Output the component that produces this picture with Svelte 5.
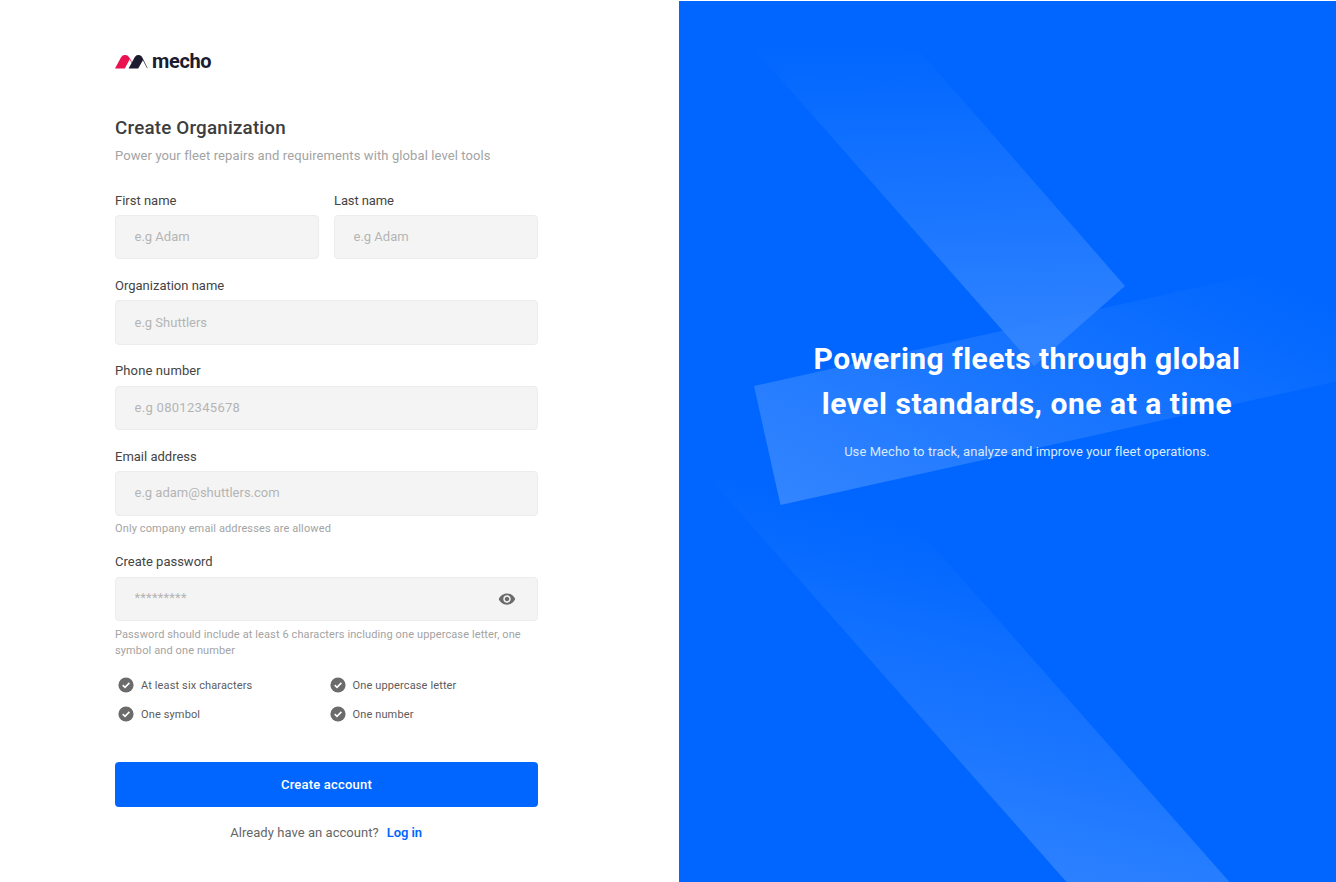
<script>
  const rules = ['At least six characters', 'One uppercase letter', 'One symbol', 'One number'];
</script>

<main class="page">
  <section class="left">
    <div class="logo">
      <svg width="33" height="14" viewBox="0 0 33 14" aria-hidden="true">
        <path d="M0 13.4 6.1 2.2Q7.3 0 9.6 0H10.5Q12.6 0 13.7 1.8L14.9 4 9.8 13.4Z" fill="#e9114f" />
        <path d="M14.2 2.8 17.2 8.2" stroke="#e9114f" stroke-width=".8" />
        <path d="M13.6 13.4 19.7 2.2Q20.9 0 23.2 0H23.7Q25.8 0 26.9 1.8L32.6 13.1 32.1 13.3 27.9 5.3 23.2 13.4Z" fill="#1c1b30" />
      </svg>
      <span>mecho</span>
    </div>
    <h1>Create Organization</h1>
    <p class="sub">Power your fleet repairs and requirements with global level tools</p>

    <form>
      <div class="pair">
        <label class="field"><span>First name</span><input placeholder="e.g Adam" /></label>
        <label class="field"><span class="t-last">Last name</span><input placeholder="e.g Adam" /></label>
      </div>
      <label class="field"><span>Organization name</span><input placeholder="e.g Shuttlers" /></label>
      <label class="field"><span class="t-phone">Phone number</span><input class="i-phone" placeholder="e.g 08012345678" /></label>
      <label class="field"><span>Email address</span><input placeholder="e.g adam@shuttlers.com" /></label>
      <p class="hint">Only company email addresses are allowed</p>
      <div class="field pw">
        <label for="pw">Create password</label>
        <div class="box">
          <input id="pw" class="i-pw" placeholder="*********" />
          <svg class="eye" width="18" height="18" viewBox="0 0 24 24" aria-hidden="true">
            <path fill="#6b6b6b" d="M12 4.5C7 4.5 2.73 7.61 1 12c1.73 4.39 6 7.5 11 7.5s9.27-3.11 11-7.5c-1.73-4.39-6-7.5-11-7.5zM12 17c-2.76 0-5-2.24-5-5s2.24-5 5-5 5 2.24 5 5-2.24 5-5 5zm0-8c-1.66 0-3 1.34-3 3s1.34 3 3 3 3-1.34 3-3-1.34-3-3-3z" />
          </svg>
        </div>
      </div>
      <p class="hint long">Password should include at least 6 characters including one uppercase letter, one<br />symbol and one number</p>
      <ul>
        {#each rules as r}
          <li>
            <svg width="16" height="16" viewBox="0 0 16 16" aria-hidden="true">
              <circle cx="8" cy="8" r="7.6" fill="#6b6b6b" />
              <path d="M4.7 8.2 7 10.3 11.4 5.9" fill="none" stroke="#fff" stroke-width="1.6" />
            </svg>
            <span>{r}</span>
          </li>
        {/each}
      </ul>
      <button type="button">Create account</button>
    </form>
    <p class="login"><span>Already have an account?</span><a href="#login">Log in</a></p>
  </section>

  <section class="right">
    <svg class="art" viewBox="679 1 657 880.5" preserveAspectRatio="none" aria-hidden="true">
      <defs>
        <linearGradient id="a" gradientUnits="userSpaceOnUse" x1="960" y1="367" x2="955" y2="40">
          <stop stop-color="#3385ff" /><stop offset="1" stop-color="#3385ff" stop-opacity="0" />
        </linearGradient>
        <linearGradient id="b" gradientUnits="userSpaceOnUse" x1="780" y1="505" x2="967" y2="123">
          <stop stop-color="#3385ff" /><stop offset="1" stop-color="#3385ff" stop-opacity="0" />
        </linearGradient>
        <linearGradient id="c" gradientUnits="userSpaceOnUse" x1="872" y1="887" x2="960" y2="533">
          <stop stop-color="#3385ff" /><stop offset="1" stop-color="#3385ff" stop-opacity="0" />
        </linearGradient>
      </defs>
      <path d="M754 386 1336 256.5V381.5L780.5 505Z" fill="url(#b)" />
      <path d="M1125 286 1034 366 746 40 910 40Z" fill="url(#a)" />
      <path d="M690 456 1066.5 882H1229.5L850 452Z" fill="url(#c)" />
    </svg>
    <div class="pitch">
      <h2><span class="l1">Powering fleets through global</span><br /><span class="l2">level standards, one at a time</span></h2>
      <p>Use Mecho to track, analyze and improve your fleet operations.</p>
    </div>
  </section>
</main>

<style>
  :global(body) { margin: 0; background: #fff; }
  * { box-sizing: border-box; }
  h1, h2, p, ul { margin: 0; padding: 0; }
  .page { display: flex; width: 1336px; height: 882px; overflow: hidden; font-family: Roboto, "Noto Sans", sans-serif; }
  .left { width: 679px; padding: 50px 0 0 115px; }
  .logo { display: flex; align-items: center; gap: 4px; height: 24px; }
  .logo span { margin-top: -2px; font-size: 20px; font-weight: 700; line-height: 24px; letter-spacing: -.35px; color: #1c1b30; }
  h1 { margin-top: 40px; font-size: 18.8px; line-height: 28px; font-weight: 500; letter-spacing: .2px; color: #3d3d3d; }
  .sub { margin-top: 4px; font-size: 13px; line-height: 20px; letter-spacing: .1px; color: #a3a3a3; }
  form { width: 423px; margin-top: 24.5px; }
  .pair { display: grid; grid-template-columns: 204px 204px; gap: 15px; }
  .field { display: flex; flex-direction: column; gap: 5.6px; height: 69px; margin-bottom: 16.35px; font-size: 13px; line-height: 19px; color: #444; }
  .t-last { letter-spacing: -.1px; }
  .t-phone { letter-spacing: .12px; }
  input { width: 100%; height: 44.4px; padding: 0 18.5px 1px; border: 1px solid #ececec; border-radius: 4px; background: #f4f4f4; font: 13px Roboto, sans-serif; outline: none; }
  input::placeholder { color: #b4b4b4; opacity: 1; }
  .i-phone { letter-spacing: .3px; }
  .i-pw { padding-bottom: 3px; letter-spacing: .2px; }
  .hint { margin-top: -10.7px; font-size: 11px; line-height: 16.7px; letter-spacing: .12px; color: #a3a3a3; }
  .field.pw { margin: 14.2px 0 0; }
  .box { position: relative; height: 44.4px; }
  .eye { position: absolute; right: 22px; top: 13px; }
  .hint.long { margin-top: 5.7px; letter-spacing: .11px; white-space: nowrap; }
  ul { display: grid; grid-template-columns: 211.5px 211.5px; row-gap: 13.5px; margin: 16.6px 0 0 3px; list-style: none; }
  li { display: flex; align-items: center; gap: 7px; height: 16px; font-size: 11px; letter-spacing: .13px; color: #5c5c5c; }
  li span { padding-top: 1.4px; }
  button { display: block; width: 423px; height: 44.4px; margin-top: 39.9px; border: 0; border-radius: 4px; background: #0066ff; color: #fff; font: 500 13px Roboto, sans-serif; letter-spacing: .2px; }
  .login { display: flex; justify-content: center; gap: 8px; width: 422px; margin-top: 16.5px; font-size: 13px; line-height: 20px; letter-spacing: .05px; color: #666; }
  .login a { color: #0066ff; font-weight: 600; letter-spacing: -.1px; text-decoration: none; }
  .right { position: relative; width: 657px; height: 880.5px; margin-top: 1px; background: #0066ff; }
  .art { position: absolute; inset: 0; width: 657px; height: 880.5px; }
  .pitch { position: relative; padding: 336px 0 0 39px; text-align: center; color: #fff; }
  h2 { font-size: 30px; line-height: 44.5px; font-weight: 700; letter-spacing: .42px; }
  .l2 { letter-spacing: .53px; }
  .pitch p { margin-top: 16px; font-size: 13px; line-height: 20px; letter-spacing: .07px; color: #dbe9ff; }
</style>
